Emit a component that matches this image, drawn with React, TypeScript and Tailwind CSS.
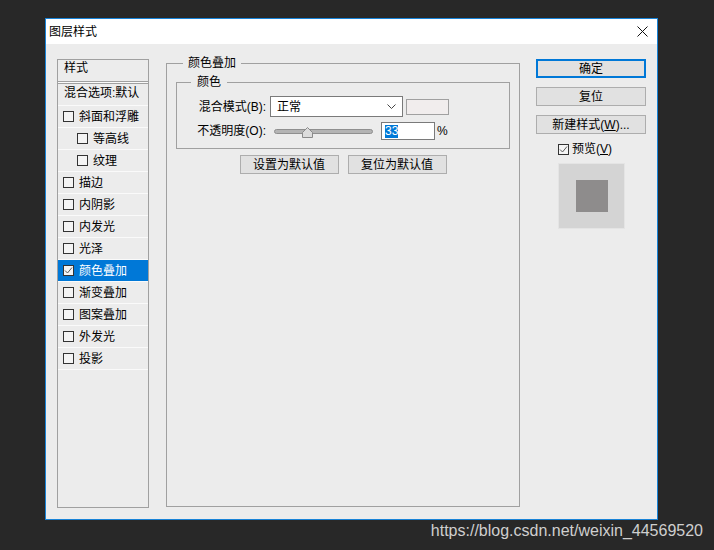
import React from "react";

const Box = ({ checked = false }: { checked?: boolean }) => (
  <span className="w-[11px] h-[11px] border border-[#333333] bg-[#f4f4f4] flex items-center justify-center shrink-0">
    {checked && (
      <svg width="9" height="9" viewBox="0 0 9 9">
        <path d="M1 4.5 L3.5 7 L8 1.5" fill="none" stroke="#5a5a5a" strokeWidth="1" />
      </svg>
    )}
  </span>
);

const Row = ({ label, indent = false, sel = false, checked = false }: { label: string; indent?: boolean; sel?: boolean; checked?: boolean }) => (
  <>
    <div
      className={`h-[21px] flex items-center gap-[5px] ${indent ? "pl-[19px]" : "pl-[5px]"} ${sel ? "bg-[#0078d7] text-white" : "text-black"}`}
    >
      <Box checked={checked} />
      <span className="leading-[16px]">{label}</span>
    </div>
    <div className="h-[1px] bg-[#fafafa]" />
  </>
);

const Btn = ({ children, primary = false, className = "" }: { children: React.ReactNode; primary?: boolean; className?: string }) => (
  <div
    className={`h-[19px] flex items-center justify-center bg-[#e1e1e1] text-black leading-[16px] ${primary ? "border-2 border-[#0078d7]" : "border border-[#adadad]"} ${className}`}
  >
    {children}
  </div>
);

export default function App() {
  return (
    <div className="w-[714px] h-[550px] bg-[#282828] flex flex-col font-['Liberation_Sans','Noto_Sans_CJK_SC',sans-serif] text-[12px] overflow-hidden">
      <div className="ml-[45px] mt-[18px] w-[613px] h-[502px] border border-[#1883d7] bg-[#ececec] flex flex-col">
        {/* title bar */}
        <div className="h-[25px] bg-white flex items-center justify-between pl-[3px] pr-[9px]">
          <span className="leading-[16px] text-black">图层样式</span>
          <svg width="11" height="11" viewBox="0 0 11 11">
            <path d="M0.5 0.5 L10.5 10.5 M10.5 0.5 L0.5 10.5" stroke="#111" strokeWidth="1" />
          </svg>
        </div>
        {/* body */}
        <div className="flex items-start">
          {/* left list */}
          <div className="ml-[11px] mt-[15px] w-[92px] h-[449px] border border-[#a0a0a0] flex flex-col">
            <div className="h-[21px] pl-[6px] leading-[16px] text-black">样式</div>
            <div className="h-[3px] border-y border-[#a0a0a0] bg-[#fafafa]" />
            <div className="h-[21px] pl-[6px] pb-[3px] flex items-center leading-[16px] text-black whitespace-nowrap">混合选项:默认</div>
            <div className="h-[1px] bg-[#fafafa]" />
            <Row label="斜面和浮雕" />
            <Row label="等高线" indent />
            <Row label="纹理" indent />
            <Row label="描边" />
            <Row label="内阴影" />
            <Row label="内发光" />
            <Row label="光泽" />
            <Row label="颜色叠加" sel checked />
            <Row label="渐变叠加" />
            <Row label="图案叠加" />
            <Row label="外发光" />
            <Row label="投影" />
          </div>

          {/* main group */}
          <fieldset className="ml-[17px] mt-[11px] w-[354px] h-[452px] border border-[#a0a0a0] p-0 m-0 min-w-0">
            <legend className="ml-[16px] px-[5px] leading-[16px] text-black">颜色叠加</legend>
            <div className="px-[9px] pt-[3px] flex flex-col">
              <fieldset className="border border-[#a0a0a0] p-0 m-0 min-w-0">
                <legend className="ml-[14px] px-[6px] leading-[16px] text-black">颜色</legend>
                <div className="pl-[13px] pt-[6px] pb-[8px] flex flex-col gap-[5px]">
                  <div className="flex items-center h-[21px]">
                    <span className="w-[76px] text-right leading-[16px] text-black">混合模式(B):</span>
                    <div className="ml-[4px] w-[133px] h-[21px] border border-[#7a7a7a] bg-white flex items-center justify-between pl-[6px] pr-[6px]">
                      <span className="leading-[16px] text-black">正常</span>
                      <svg width="9" height="5" viewBox="0 0 9 5">
                        <path d="M0.5 0.5 L4.5 4.5 L8.5 0.5" fill="none" stroke="#444" strokeWidth="1" />
                      </svg>
                    </div>
                    <div className="ml-[3px] w-[43px] h-[16px] border border-[#a0a0a0] bg-[#f1eded]" />
                  </div>
                  <div className="flex items-center h-[18px]">
                    <span className="w-[76px] text-right leading-[16px] text-black">不透明度(O):</span>
                    <div className="relative ml-[8px] w-[99px] h-[18px] flex items-center">
                      <div className="w-full h-[5px] rounded-full bg-[#b4b4b4] border border-[#8f8f8f]" />
                      <svg className="absolute left-[28px] top-[5px]" width="11" height="11" viewBox="0 0 11 11">
                        <path d="M0.5 10.5 L0.5 5.5 L5.5 0.5 L10.5 5.5 L10.5 10.5 Z" fill="#dcdcdc" stroke="#8a8a8a" strokeWidth="1" />
                      </svg>
                    </div>
                    <div className="ml-[8px] w-[54px] h-[18px] border border-[#7a7a7a] bg-white flex items-center pl-[3px]">
                      <span className="bg-[#0078d7] text-white leading-[13px]">33</span>
                    </div>
                    <span className="ml-[2px] leading-[16px] text-black">%</span>
                  </div>
                </div>
              </fieldset>
              <div className="mt-[6px] flex justify-center gap-[9px]">
                <Btn className="w-[99px]">设置为默认值</Btn>
                <Btn className="w-[99px]">复位为默认值</Btn>
              </div>
            </div>
          </fieldset>

          {/* right buttons */}
          <div className="ml-[16px] mt-[15px] w-[110px] flex flex-col">
            <Btn primary>确定</Btn>
            <Btn className="mt-[9px]">复位</Btn>
            <Btn className="mt-[9px]">
              新建样式(<span className="underline">W</span>)...
            </Btn>
            <div className="mt-[8px] h-[14px] pl-[22px] flex items-center gap-[3px]">
              <Box checked />
              <span className="leading-[16px] text-black">
                预览(<span className="underline">V</span>)
              </span>
            </div>
            <div className="mt-[7px] ml-[22px] w-[67px] h-[66px] bg-[#d4d4d4] border border-[#e4e4e4] flex items-center justify-center">
              <div className="w-[32px] h-[32px] bg-[#8e8c8c]" />
            </div>
          </div>
        </div>
      </div>
      <div className="mt-[2px] pr-[11px] text-right text-[16px] leading-[18px] text-[#cfcfcf]">
        https://blog.csdn.net/weixin_44569520
      </div>
    </div>
  );
}
